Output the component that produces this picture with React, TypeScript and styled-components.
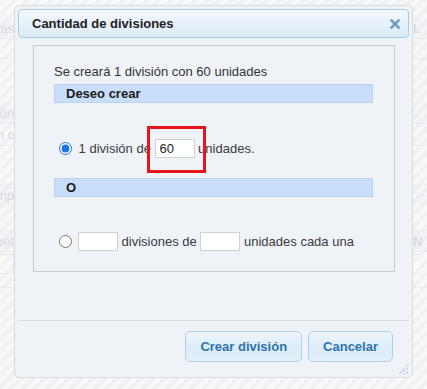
import React from "react";
import styled, { createGlobalStyle } from "styled-components";

const GlobalStyle = createGlobalStyle`
  html, body {
    margin: 0;
    padding: 0;
    background: #f3f3f3;
  }
  body {
    font-family: "Liberation Sans", Arial, sans-serif;
    font-size: 13px;
    color: #333333;
  }
`;

const Screen = styled.div`
  position: relative;
  width: 427px;
  height: 389px;
  overflow: hidden;
  background: #f4f4f4;
`;

/* faded page behind the modal */
const BackPage = styled.div`
  display: flex;
  flex-direction: column;
  padding-top: 19px;
`;

const BackRow = styled.div<{ $h: number; $band?: boolean; $line?: boolean }>`
  height: ${(p) => p.$h}px;
  display: flex;
  justify-content: space-between;
  align-items: center;
  background: ${(p) => (p.$band ? "#eceff4" : "transparent")};
  border-bottom: 1px solid ${(p) => (p.$line ? "#e2e4e8" : "transparent")};
  font-size: 13px;
  color: #c3c7cf;
  font-weight: bold;
`;

const BackText = styled.span<{ $right?: boolean }>`
  display: block;
  width: 14px;
  overflow: hidden;
  white-space: nowrap;
  direction: ${(p) => (p.$right ? "ltr" : "rtl")};
  padding-left: ${(p) => (p.$right ? "8px" : "0")};
  font-weight: ${(p) => (p.$right ? "bold" : "normal")};
`;

const BackBox = styled.span<{ $right?: boolean }>`
  display: block;
  width: ${(p) => (p.$right ? "8px" : "13px")};
  height: 18px;
  border: 1px solid #d6d8dc;
  border-left-width: ${(p) => (p.$right ? "1px" : "0")};
  border-right-width: ${(p) => (p.$right ? "0" : "1px")};
  margin-right: ${(p) => (p.$right ? "6px" : "0")};
  background: #f8f8f8;
`;

const Stripes = styled.div`
  position: absolute;
  inset: 0;
  background: repeating-linear-gradient(
    135deg,
    rgba(238, 238, 238, 0.55) 0px,
    rgba(238, 238, 238, 0.55) 4px,
    rgba(255, 255, 255, 0.35) 4px,
    rgba(255, 255, 255, 0.35) 8.5px
  );
`;

const Dialog = styled.div`
  position: absolute;
  left: 14px;
  top: 5px;
  width: 391px;
  height: 365px;
  padding: 3px;
  border: 1px solid #d9dbdf;
  border-radius: 5px;
  background: #eff3f7;
  display: flex;
  flex-direction: column;
`;

const TitleBar = styled.div`
  height: 27px;
  border: 1px solid #a9cbe6;
  border-radius: 4px;
  background: linear-gradient(#f3f8fd, #dcebf7);
  display: flex;
  align-items: center;
  justify-content: space-between;
  padding: 0 8px 0 13px;
`;

const Title = styled.span`
  font-size: 13px;
  font-weight: bold;
  color: #222222;
`;

const CloseButton = styled.button`
  border: 0;
  background: none;
  padding: 0;
  width: 10px;
  height: 10px;
  display: flex;
  cursor: pointer;
`;

const Content = styled.div`
  padding: 7px 14px 0 15px;
`;

const Fieldset = styled.div`
  border: 1px solid #c8ccd1;
  padding: 18px 21px 0 20px;
  box-sizing: border-box;
  height: 227px;
`;

const Lead = styled.div`
  line-height: 16px;
  height: 16px;
`;

const Band = styled.div<{ $top: number }>`
  margin-top: ${(p) => p.$top}px;
  height: 17px;
  line-height: 17px;
  border: 1px solid #b9d3f3;
  background: #c9defa;
  padding-left: 11px;
  font-weight: bold;
  color: #1a1a1a;
`;

const Choice = styled.label<{ $top: number }>`
  display: flex;
  align-items: center;
  margin-top: ${(p) => p.$top}px;
  height: 19px;
  white-space: pre;
  color: #3a3a44;
`;

const Radio = styled.input<{ $gap?: number }>`
  width: 13px;
  height: 13px;
  margin: 0 ${(p) => p.$gap ?? 3}px 0 5px;
  accent-color: #1a73e8;
`;

const Field = styled.span<{ $marked?: boolean }>`
  position: relative;
  display: inline-flex;
  &::after {
    content: "";
    display: ${(p) => (p.$marked ? "block" : "none")};
    position: absolute;
    left: -8px;
    top: -13px;
    width: 53px;
    height: 41px;
    border: 3px solid #e8141a;
  }
`;

const NumberInput = styled.input`
  width: 40px;
  height: 19px;
  box-sizing: border-box;
  border: 1px solid #cfd1d4;
  background: #ffffff;
  font-family: "Liberation Sans", Arial, sans-serif;
  font-size: 13px;
  color: #222222;
  padding: 0 4px;
  margin: 0;
  outline: none;
`;

const Footer = styled.div`
  border-top: 1px solid #d8dcdf;
  margin-top: 48px;
  padding: 10px 16px 0 0;
  display: flex;
  justify-content: flex-end;
  gap: 6px;
`;

const Button = styled.button`
  height: 31px;
  padding: 0 14px;
  border: 1px solid #acd0ec;
  border-radius: 5px;
  background: linear-gradient(#eef6fd 0%, #dbecf9 55%, #e3f0fb 100%);
  font-family: "Liberation Sans", Arial, sans-serif;
  font-size: 13px;
  font-weight: bold;
  color: #2f74a8;
  cursor: pointer;
`;

const Grip = styled.svg`
  position: absolute;
  right: 3px;
  bottom: 2px;
`;

export default function App() {
  return (
    <>
      <GlobalStyle />
      <Screen>
        <BackPage>
          <BackRow $h={19} $band $line>
            <BackText>Etiquetas</BackText>
            <BackText $right>L</BackText>
          </BackRow>
          <BackRow $h={19} $line />
          <BackRow $h={43} />
          <BackRow $h={20} $band $line>
            <BackText>ón</BackText>
            <BackText $right />
          </BackRow>
          <BackRow $h={21} $line>
            <BackText>n c</BackText>
            <BackText $right />
          </BackRow>
          <BackRow $h={38} $line />
          <BackRow $h={20} $band>
            <BackText>mp</BackText>
            <BackText $right />
          </BackRow>
          <BackRow $h={24} $line />
          <BackRow $h={20} $band $line>
            <BackText>uet</BackText>
            <BackText $right>N</BackText>
          </BackRow>
          <BackRow $h={24}>
            <BackBox />
            <BackBox $right />
          </BackRow>
          <BackRow $h={10} $line />
        </BackPage>
        <Stripes />

        <Dialog>
          <TitleBar>
            <Title>Cantidad de divisiones</Title>
            <CloseButton aria-label="Cerrar">
              <svg width="10" height="10" viewBox="0 0 10 10">
                <path
                  d="M1.5 1.5 L8.5 8.5 M8.5 1.5 L1.5 8.5"
                  stroke="#6f9ccb"
                  strokeWidth="2.6"
                  strokeLinecap="square"
                />
              </svg>
            </CloseButton>
          </TitleBar>

          <Content>
            <Fieldset>
              <Lead>Se creará 1 división con 60 unidades</Lead>
              <Band $top={4}>Deseo crear</Band>
              <Choice $top={36}>
                <Radio type="radio" name="modo" defaultChecked />
                {" 1 división de "}
                <Field $marked>
                  <NumberInput defaultValue="60" />
                </Field>
                {" unidades."}
              </Choice>
              <Band $top={20}>O</Band>
              <Choice $top={35}>
                <Radio type="radio" name="modo" $gap={6} />
                <Field>
                  <NumberInput />
                </Field>
                {" divisiones de "}
                <Field>
                  <NumberInput />
                </Field>
                {" unidades cada una"}
              </Choice>
            </Fieldset>
          </Content>

          <Footer>
            <Button>Crear división</Button>
            <Button>Cancelar</Button>
          </Footer>

          <Grip width="11" height="11" viewBox="0 0 11 11">
            <path
              d="M10 1 L1 10 M10 4.5 L4.5 10 M10 8 L8 10"
              stroke="#7aa6d2"
              strokeWidth="1"
              strokeDasharray="1 1"
            />
          </Grip>
        </Dialog>
      </Screen>
    </>
  );
}
